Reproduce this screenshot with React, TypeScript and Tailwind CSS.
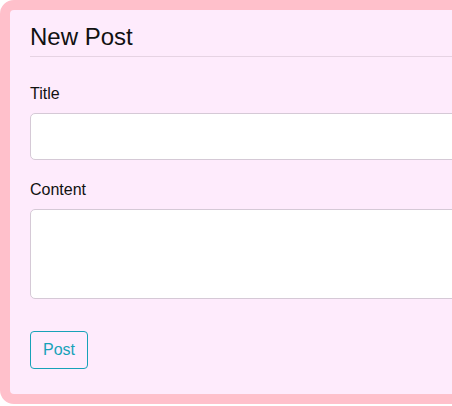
export default function App() {
  return (
    <div className="w-[452px] h-[406px] overflow-hidden bg-white font-['Liberation_Sans',Arial,sans-serif]">
      <div className="w-[620px] h-[404px] rounded-[14px] border-[10px] border-[#ffc0cb] bg-[#feebfc] pl-5 pr-5 pt-[13px]">
        <h1 className="text-[24px] leading-[28.8px] text-[#111] pb-1 border-b border-[#e6d3e3]">
          New Post
        </h1>
        <div className="mt-[25px]">
          <label className="block text-[16px] leading-6 text-[#111] mb-[7px]">Title</label>
          <input className="block w-full h-[47px] rounded-[5px] border border-[#d5c9d6] bg-white" />
        </div>
        <div className="mt-[18px]">
          <label className="block text-[16px] leading-6 text-[#111] mb-[7px]">Content</label>
          <textarea className="block w-full h-[90px] rounded-[5px] border border-[#d5c9d6] bg-white resize-none" />
        </div>
        <button className="mt-[32px] h-[38px] px-3 rounded-[4px] border border-[#17a2b8] text-[#17a2b8] text-[16px] bg-transparent">
          Post
        </button>
      </div>
    </div>
  );
}
